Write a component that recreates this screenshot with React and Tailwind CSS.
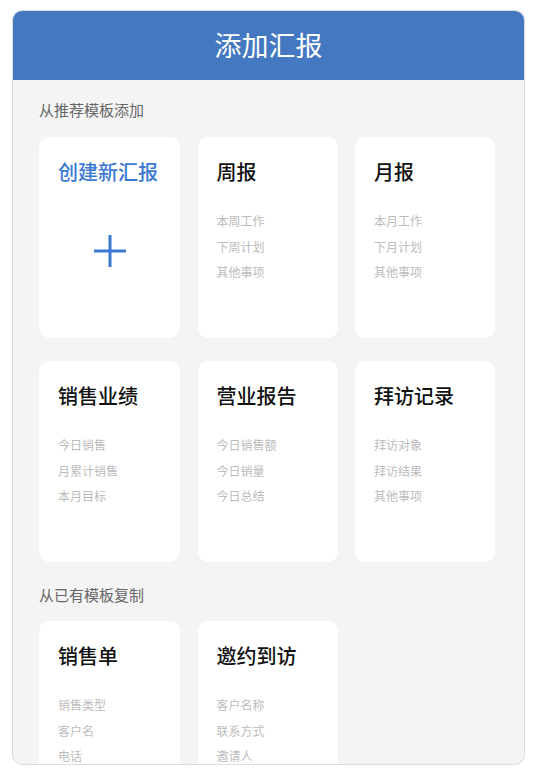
import React from "react";

const FONT = { fontFamily: '"Noto Sans CJK SC", "Noto Sans", sans-serif' };

const recommended = [
  { title: "周报", items: ["本周工作", "下周计划", "其他事项"] },
  { title: "月报", items: ["本月工作", "下月计划", "其他事项"] },
  { title: "销售业绩", items: ["今日销售", "月累计销售", "本月目标"] },
  { title: "营业报告", items: ["今日销售额", "今日销量", "今日总结"] },
  { title: "拜访记录", items: ["拜访对象", "拜访结果", "其他事项"] },
];

const existing = [
  { title: "销售单", items: ["销售类型", "客户名", "电话"] },
  { title: "邀约到访", items: ["客户名称", "联系方式", "邀请人"] },
];

function Card({ title, items }) {
  return (
    <div className="h-[201px] rounded-[10px] bg-white pl-[19px] pt-[23px]">
      <div className="text-[20px] leading-[24px] font-medium text-[#111111]">{title}</div>
      <div className="mt-[24px] flex flex-col">
        {items.map((t) => (
          <div key={t} className="text-[12px] leading-[25.5px] text-[#bcbcbc]">
            {t}
          </div>
        ))}
      </div>
    </div>
  );
}

function CreateCard() {
  return (
    <div className="h-[201px] rounded-[10px] bg-white pt-[23px] pr-[3px] flex flex-col items-center">
      <div className="text-[20px] leading-[24px] font-medium text-[#3b78d4]">创建新汇报</div>
      <svg width="32" height="32" viewBox="0 0 32 32" className="mt-[51px] ml-[3px]">
        <path d="M16 0 V32 M0 16 H32" stroke="#3b78d4" strokeWidth="3" />
      </svg>
    </div>
  );
}

export default function App() {
  return (
    <div className="bg-white w-[537px] h-[779px] pl-[12px] pt-[10px]" style={FONT}>
      <div className="w-[513px] h-[755px] rounded-[10px] border border-[#dcdcdc] overflow-hidden bg-[#f4f4f4] flex flex-col">
        <div className="h-[70px] -mt-px -mx-px bg-[#4478c1] flex items-center justify-center shrink-0">
          <span className="text-[27px] leading-[30px] text-white">添加汇报</span>
        </div>
        <div className="pl-[26px] pt-[20px]">
          <div className="text-[15px] leading-[20px] text-[#666666]">从推荐模板添加</div>
          <div className="mt-[17px] grid grid-cols-[141px_140px_140px] gap-x-[17.5px] gap-y-[23px]">
            <CreateCard />
            {recommended.map((c) => (
              <Card key={c.title} {...c} />
            ))}
          </div>
          <div className="mt-[23px] text-[15px] leading-[20px] text-[#666666]">从已有模板复制</div>
          <div className="mt-[16px] grid grid-cols-[141px_140px_140px] gap-x-[17.5px]">
            {existing.map((c) => (
              <Card key={c.title} {...c} />
            ))}
          </div>
        </div>
      </div>
    </div>
  );
}
